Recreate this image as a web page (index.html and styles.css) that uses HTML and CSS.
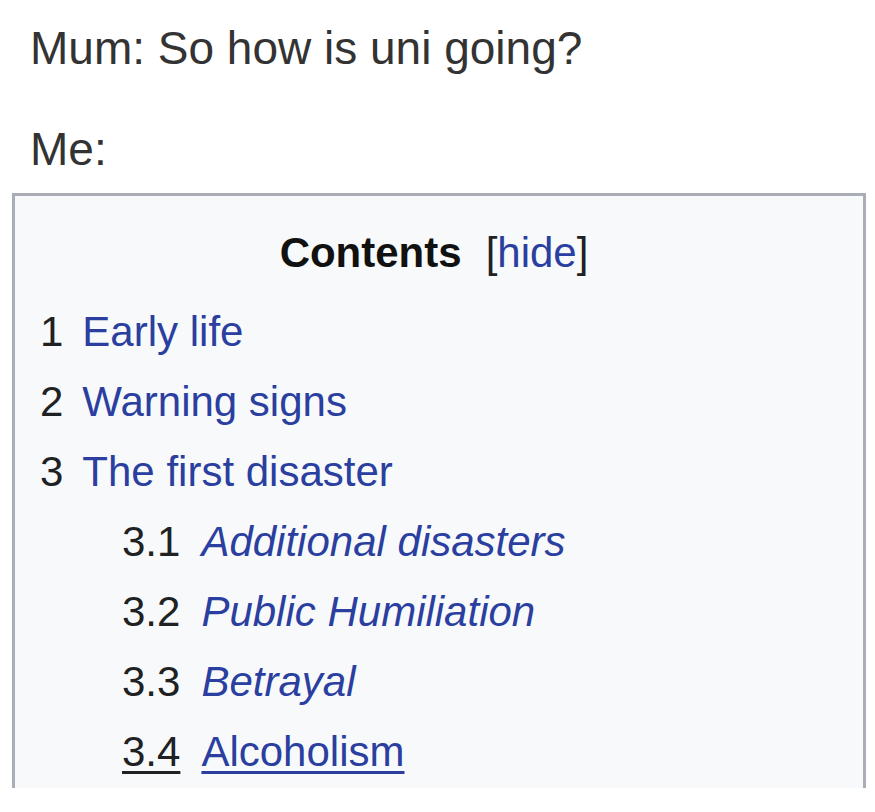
FILE: index.html
```html
<!DOCTYPE html>
<html lang="en">
<head>
<meta charset="utf-8">
<title>Mum: So how is uni going?</title>
<link rel="stylesheet" href="styles.css">
</head>
<body>
<div class="post">
  <p class="line line-first">Mum: So how is uni going?</p>
  <p class="line line-second">Me:</p>
</div>
<div class="clip">
  <div class="toc">
    <div class="toctitle"><span class="title-text">Contents</span><span class="toggle">[<a href="#">hide</a>]</span></div>
    <ul class="toc-list">
      <li class="level1"><a href="#"><span class="num">1</span><span class="text">Early life</span></a></li>
      <li class="level1"><a href="#"><span class="num">2</span><span class="text">Warning signs</span></a></li>
      <li class="level1"><a href="#"><span class="num">3</span><span class="text">The first disaster</span></a>
        <ul class="toc-sub">
          <li class="level2"><a href="#"><span class="num">3.1</span><span class="text italic">Additional disasters</span></a></li>
          <li class="level2"><a href="#"><span class="num">3.2</span><span class="text italic">Public Humiliation</span></a></li>
          <li class="level2"><a href="#"><span class="num">3.3</span><span class="text italic">Betrayal</span></a></li>
          <li class="level2 hover"><a href="#"><span class="num">3.4</span><span class="text">Alcoholism</span></a></li>
        </ul>
      </li>
    </ul>
  </div>
</div>
</body>
</html>
```

FILE: styles.css
```css
html, body {
  margin: 0;
  padding: 0;
  background: #ffffff;
}

body {
  width: 875px;
  height: 812px;
  overflow: hidden;
  font-family: "Liberation Sans", Arial, Helvetica, sans-serif;
}

.post {
  padding: 23px 0 0 30px;
}

.line {
  margin: 0;
  font-size: 46px;
  line-height: 51px;
  color: #333333;
}

.line-second {
  margin-top: 50px;
}

.clip {
  margin: 18px 0 0 12px;
  width: 854px;
  height: 595px;
  overflow: hidden;
}

.toc {
  box-sizing: border-box;
  width: 854px;
  min-height: 700px;
  border: 3px solid #a9adb5;
  background: #f8f9fa;
  padding: 34px 0 0 25px;
  font-size: 42px;
  color: #202122;
}

.toctitle {
  text-align: center;
  line-height: 46px;
  padding-right: 25px;
  margin-right: 10px;
}

.title-text {
  font-weight: bold;
  color: #111111;
}

.toggle {
  margin-left: 24px;
  color: #202122;
}

.toggle a {
  color: #2a3f9f;
  text-decoration: none;
}

.toc-list,
.toc-sub {
  list-style: none;
  margin: 0;
  padding: 0;
}

.toc-list {
  margin-top: 21px;
}

.toc-list li {
  line-height: 70px;
}

.toc-sub {
  padding-left: 82px;
}

.toc-list a {
  text-decoration: none;
  color: #2a3f9f;
}

.num {
  color: #202122;
  margin-right: 19px;
}

.level2 .num {
  margin-right: 21px;
}

.italic {
  font-style: italic;
}

.hover .num,
.hover .text {
  text-decoration: underline;
  text-decoration-thickness: 3px;
  text-underline-offset: 5px;
}
```
